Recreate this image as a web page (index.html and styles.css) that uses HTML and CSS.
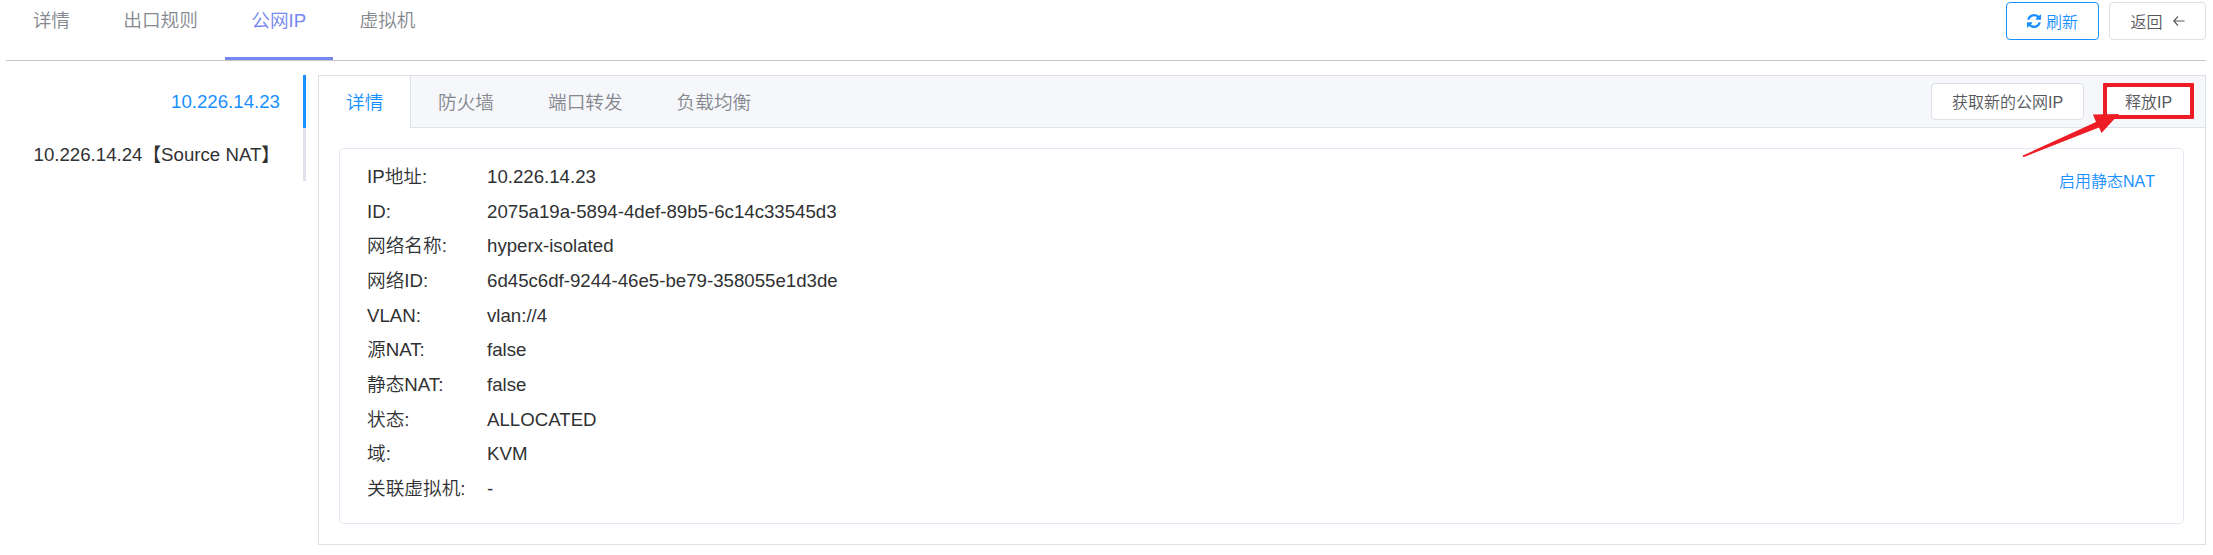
FILE: index.html
```html
<!DOCTYPE html>
<html lang="zh-CN">
<head>
<meta charset="utf-8">
<title>公网IP</title>
<link rel="stylesheet" href="styles.css">
</head>
<body>
<header class="topbar">
  <nav class="tabs">
    <a class="tab">详情</a>
    <a class="tab">出口规则</a>
    <a class="tab tab-active">公网IP</a>
    <a class="tab">虚拟机</a>
  </nav>
  <div class="actions">
    <button class="btn btn-refresh"><svg class="icon-refresh" viewBox="0 0 1536 1536"><path fill="currentColor" d="M1511 928q0 5-1 7-64 268-268 434.500T764 1536q-146 0-282.500-55T238 1324l-129 129q-19 19-45 19t-45-19-19-45V960q0-26 19-45t45-19h448q26 0 45 19t19 45-19 45l-137 137q71 66 161 102t187 36q134 0 250-65t186-179q11-17 53-117 8-23 30-23h192q13 0 22.500 9.500t9.500 22.500zm25-800v448q0 26-19 45t-45 19h-448q-26 0-45-19t-19-45 19-45l138-138Q969 256 768 256q-134 0-250 65T332 500q-11 17-53 117-8 23-30 23H50q-13 0-22.500-9.500T18 608v-7q65-268 270-434.500T768 0q146 0 284 55.500T1297 212l130-129q19-19 45-19t45 19 19 45z"/></svg>刷新</button>
    <button class="btn btn-back">返回<svg class="icon-back" viewBox="0 0 12 12"><path d="M11.500 6H.8M5 1.500L.8 6 5 10.500" fill="none" stroke="currentColor" stroke-width="1.100"/></svg></button>
  </div>
</header>
<main class="content">
  <aside class="ip-list">
    <a class="ip ip-active">10.226.14.23</a>
    <a class="ip">10.226.14.24【Source NAT】</a>
  </aside>
  <section class="card">
    <div class="card-head">
      <nav class="card-tabs">
        <a class="card-tab card-tab-active">详情</a>
        <a class="card-tab">防火墙</a>
        <a class="card-tab">端口转发</a>
        <a class="card-tab">负载均衡</a>
      </nav>
      <div class="card-actions">
        <button class="btn btn-acquire">获取新的公网IP</button>
        <div class="release">
          <button class="btn btn-release">释放IP</button>
          <svg class="arrow" viewBox="0 0 98 46"><path fill="#ee1c25" d="M1 42.500L74 9 71 1.500 97 1 79.500 20 77 14.500 2 44Q0 44 1 42.500Z"/></svg>
        </div>
      </div>
    </div>
    <div class="panel">
      <dl class="details">
        <dt>IP地址:</dt><dd>10.226.14.23</dd>
        <dt>ID:</dt><dd>2075a19a-5894-4def-89b5-6c14c33545d3</dd>
        <dt>网络名称:</dt><dd>hyperx-isolated</dd>
        <dt>网络ID:</dt><dd>6d45c6df-9244-46e5-be79-358055e1d3de</dd>
        <dt>VLAN:</dt><dd>vlan://4</dd>
        <dt>源NAT:</dt><dd>false</dd>
        <dt>静态NAT:</dt><dd>false</dd>
        <dt>状态:</dt><dd>ALLOCATED</dd>
        <dt>域:</dt><dd>KVM</dd>
        <dt>关联虚拟机:</dt><dd>-</dd>
      </dl>
      <a class="link">启用静态NAT</a>
    </div>
  </section>
</main>
</body>
</html>
```
FILE: styles.css
```css
* { box-sizing: border-box; }
body {
  margin: 0;
  padding: 0 7px 0 6px;
  background: #fff;
  color: #303133;
  font: 18.667px "Liberation Sans", "Noto Sans CJK SC", sans-serif;
}
.topbar {
  display: flex;
  justify-content: space-between;
  height: 61px;
  border-bottom: 1px solid #c6c6c6;
}
.tabs, .card-tabs { display: flex; white-space: nowrap; }
.tab {
  height: 60px;
  padding: 0 26.667px;
  line-height: 42px;
  color: #85888f;
  font-weight: 350;
}
.tab-active { color: #7587f0; border-bottom: 3px solid #7587f0; }
.actions { display: flex; gap: 10px; padding-top: 2px; }
.btn {
  display: flex;
  align-items: center;
  justify-content: center;
  height: 38px;
  padding: 0 0 1px;
  border: 1px solid #dcdfe6;
  border-radius: 4px;
  background: #fff;
  color: #56585c;
  font: 350 16px "Liberation Sans", "Noto Sans CJK SC", sans-serif;
  white-space: nowrap;
}
.btn-refresh { width: 93px; border-color: #1890ff; color: #1890ff; }
.btn-back { width: 97px; }
.icon-refresh { width: 14px; height: 14px; margin-right: 5px; }
.icon-back { width: 12px; height: 12px; margin-left: 10px; }
.content { display: flex; gap: 12px; padding-top: 14px; }
.ip-list { width: 300px; }
.ip {
  display: block;
  height: 53px;
  padding-right: 23px;
  border-right: 3px solid #dfe2ed;
  line-height: 53px;
  text-align: right;
}
.ip-active { color: #1890ff; border-color: #1890ff; }
.card { flex: 1; height: 470px; border: 1px solid #dcdfe6; }
.card-head {
  display: flex;
  justify-content: space-between;
  height: 52px;
  border-bottom: 1px solid #dfe2e9;
  background: #f5f7fa;
}
.card-tab {
  height: 52px;
  padding: 0 27px;
  line-height: 54px;
  color: #85888f;
  font-weight: 350;
}
.card-tab-active { width: 92px; padding-right: 0; background: #fff; color: #1890ff; border-right: 1px solid #dcdfe6; }
.card-actions { display: flex; gap: 19px; padding: 7px 11px 0 0; }
.btn-acquire { width: 153px; height: 37px; }
.release { position: relative; }
.btn-release { width: 91px; height: 36px; border: 4px solid #ee1c25; border-radius: 1px; }
.arrow { position: absolute; left: -81px; top: 30px; width: 98px; height: 46px; }
.panel {
  display: flex;
  justify-content: space-between;
  height: 376px;
  margin: 20px 21px 0 20px;
  padding: 10px 28px 10px 27px;
  border: 1px solid #e6e9f5;
  border-radius: 5px;
}
.details {
  display: grid;
  grid-template-columns: 120px auto;
  grid-auto-rows: 34.667px;
  margin: 0;
  line-height: 35.2px;
}
.details dt { font-weight: 350; }
.details dd { margin: 0; }
.link { margin-top: 13px; height: 20px; line-height: 20px; font-size: 16px; font-weight: 350; font-kerning: none; color: #1890ff; }
```
